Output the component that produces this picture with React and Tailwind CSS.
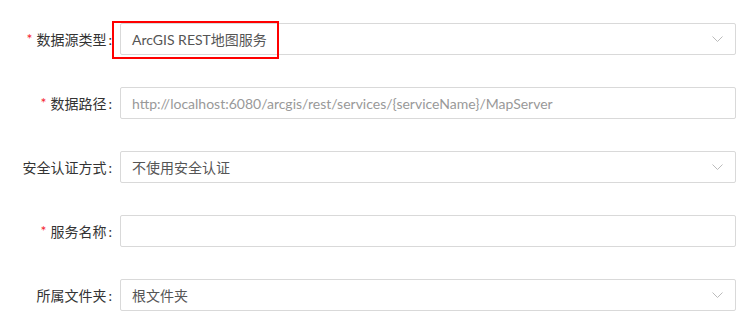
const FIELDS = [
    { label: '数据源类型', required: true, value: 'ArcGIS REST地图服务', select: true, highlight: true },
    { label: '数据路径', required: true, placeholder: 'http://localhost:6080/arcgis/rest/services/{serviceName}/MapServer' },
    { label: '安全认证方式', value: '不使用安全认证', select: true },
    { label: '服务名称', required: true, value: '' },
    { label: '所属文件夹', value: '根文件夹', select: true },
];

// 下拉箭头
function Arrow() {
    return (
        <svg className="ml-auto mr-[12px] w-[11px] h-[6px]" viewBox="0 0 11 6" fill="none">
            <polyline points="0.5,0.5 5.5,5.5 10.5,0.5" stroke="#bbbbbb" strokeWidth="1" />
        </svg>
    );
}

export default function App() {
    return (
        <div
            className="w-[753px] h-[323px] bg-white pt-[23px] flex flex-col gap-[32px] text-[14px] text-[#333]"
            style={{ fontFamily: 'Lato, "Noto Sans CJK SC", sans-serif' }}
        >
            {FIELDS.map((f) => (
                <div key={f.label} className="flex items-center h-[32px]">
                    {/* 标签 */}
                    <div className="w-[120px] shrink-0 pr-[8px] flex justify-end items-center whitespace-nowrap">
                        {f.required && <span className="text-[#f5222d] mr-[4px] text-[14px] leading-none">*</span>}
                        <span>{f.label}</span>
                        <span className="ml-[2px]">:</span>
                    </div>
                    {/* 输入框 */}
                    <div className="relative w-[616px] h-[32px]">
                        <div className="h-full border border-[#d9d9d9] rounded-[2px] flex items-center pl-[11px] bg-white">
                            {f.placeholder ? (
                                <span className="text-[#999] whitespace-nowrap">{f.placeholder}</span>
                            ) : (
                                <span className="text-[#555] whitespace-nowrap">{f.value}</span>
                            )}
                            {f.select && <Arrow />}
                        </div>
                        {f.highlight && (
                            <div className="absolute left-[-8px] top-[-2px] w-[167px] h-[38px] border-2 border-[#ff0000]" />
                        )}
                    </div>
                </div>
            ))}
        </div>
    );
}
